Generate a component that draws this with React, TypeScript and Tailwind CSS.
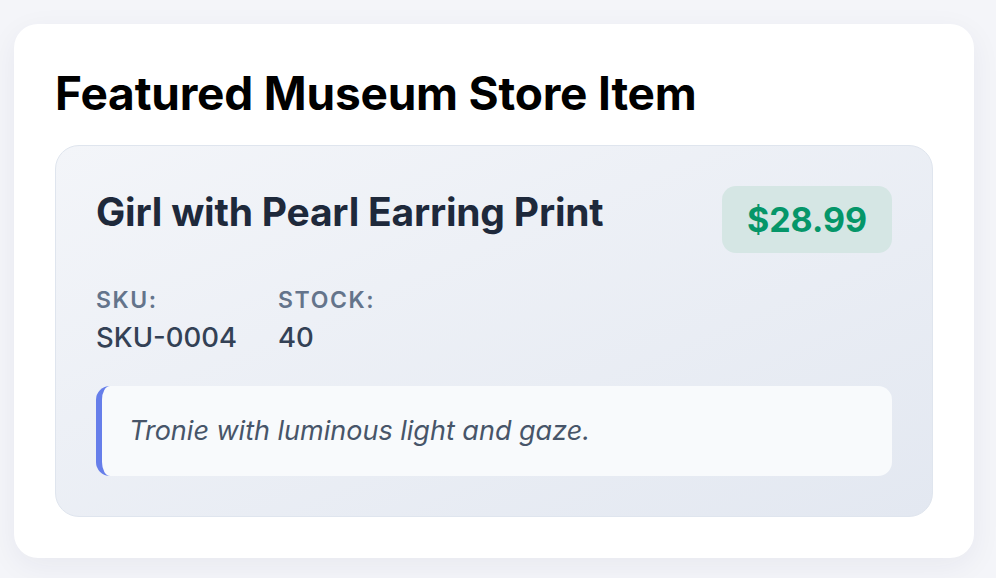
import React from "react";

export default function App() {
  return (
    <div
      className="min-h-screen w-full bg-[#f4f5f9] pl-[14px] pr-[22px] pt-[24px] pb-[20px]"
      style={{ fontFamily: "Inter, 'Noto Sans', sans-serif" }}
    >
      <div className="rounded-[24px] bg-white px-[41px] pt-[41px] pb-[41px] shadow-[0_8px_30px_rgba(30,41,80,0.06)]">
        <h1 className="text-[46px] font-bold leading-[56px] tracking-[-0.2px] text-black">
          Featured Museum Store Item
        </h1>
        <div className="mt-[24px] rounded-[24px] border border-[#dfe5ee] bg-gradient-to-br from-[#f3f5f9] to-[#e3e8f1] px-[40px] pt-[40px] pb-[40px]">
          <div className="flex items-start justify-between">
            <h2 className="pt-[3px] text-[39px] font-bold leading-[46px] tracking-[-0.2px] text-[#1e293b]">
              Girl with Pearl Earring Print
            </h2>
            <div className="flex h-[67px] w-[170px] items-center justify-center rounded-[14px] bg-[#d5e6e4] text-[34px] font-bold text-[#059669]">
              $28.99
            </div>
          </div>
          <div className="mt-[33px] flex gap-[41px]">
            <div className="flex flex-col">
              <span className="text-[23px] font-semibold uppercase leading-[28px] tracking-[1.6px] text-[#64748b]">
                SKU:
              </span>
              <span className="mt-[6px] text-[27.5px] font-medium leading-[34px] text-[#334155]">
                SKU-0004
              </span>
            </div>
            <div className="flex flex-col">
              <span className="text-[23px] font-semibold uppercase leading-[28px] tracking-[1.6px] text-[#64748b]">
                Stock:
              </span>
              <span className="mt-[6px] text-[27.5px] font-medium leading-[34px] text-[#334155]">
                40
              </span>
            </div>
          </div>
          <div className="mt-[32px] flex h-[90px] items-center rounded-[14px] border-l-[6px] border-[#667eea] bg-[#f8fafc] pl-[27px]">
            <p className="text-[27px] italic leading-[34px] text-[#475569]">
              Tronie with luminous light and gaze.
            </p>
          </div>
        </div>
      </div>
    </div>
  );
}
